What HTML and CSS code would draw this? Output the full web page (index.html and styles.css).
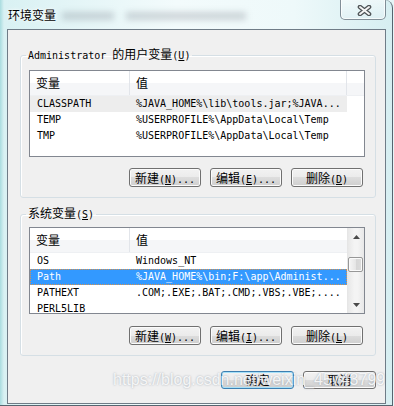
FILE: index.html
```html
<!DOCTYPE html>
<html lang="zh-CN">
<head>
    <meta charset="UTF-8">
    <meta name="viewport" content="width=device-width, initial-scale=1.0">
    <title>环境变量</title>
    <link rel="stylesheet" href="styles.css">
</head>
<body>

    <!-- Dialog window -->
    <div class="window">
        <div class="titlebar">
            <span class="title zh">环境变量</span>
            <span class="ghost" aria-hidden="true"><i></i><i></i></span>
            <button class="close" aria-label="关闭">
                <svg width="15" height="11" viewBox="0 0 15 11">
                    <path d="M3 2 L12 9 M12 2 L3 9" stroke="#4f5457" stroke-width="4.6" stroke-linecap="round" fill="none"/>
                    <path d="M3 2 L12 9 M12 2 L3 9" stroke="#f4f4f4" stroke-width="2" stroke-linecap="round" fill="none"/>
                </svg>
            </button>
        </div>

        <div class="content">
            <!-- User variables -->
            <fieldset class="group">
                <legend>Administrator <span class="zh">的用户变量</span>(<u>U</u>)</legend>
                <div class="list">
                    <div class="table">
                        <div class="head">
                            <div class="col zh">变量</div>
                            <div class="col zh">值</div>
                            <div class="col"></div>
                        </div>
                        <div class="row muted"><div class="col">CLASSPATH</div><div class="col">%JAVA_HOME%\lib\tools.jar;%JAVA...</div></div>
                        <div class="row"><div class="col">TEMP</div><div class="col">%USERPROFILE%\AppData\Local\Temp</div></div>
                        <div class="row"><div class="col">TMP</div><div class="col">%USERPROFILE%\AppData\Local\Temp</div></div>
                    </div>
                </div>
                <div class="actions">
                    <button class="btn"><span class="zh">新建</span>(<u>N</u>)...</button>
                    <button class="btn"><span class="zh">编辑</span>(<u>E</u>)...</button>
                    <button class="btn"><span class="zh">删除</span>(<u>D</u>)</button>
                </div>
            </fieldset>

            <!-- System variables -->
            <fieldset class="group group-sys">
                <legend><span class="zh">系统变量</span>(<u>S</u>)</legend>
                <div class="list">
                    <div class="table">
                        <div class="head">
                            <div class="col zh">变量</div>
                            <div class="col zh">值</div>
                        </div>
                        <div class="row"><div class="col">OS</div><div class="col">Windows_NT</div></div>
                        <div class="row selected"><div class="col">Path</div><div class="col">%JAVA_HOME%\bin;F:\app\Administ...</div></div>
                        <div class="row"><div class="col">PATHEXT</div><div class="col">.COM;.EXE;.BAT;.CMD;.VBS;.VBE;....</div></div>
                        <div class="row"><div class="col">PERL5LIB</div><div class="col"></div></div>
                    </div>
                    <div class="scroll">
                        <div class="arrow">
                            <svg width="7" height="4" viewBox="0 0 7 4"><path d="M0 4 L3.5 0 L7 4Z" fill="#4a4a4a"/></svg>
                        </div>
                        <div class="track"><div class="thumb"></div></div>
                        <div class="arrow">
                            <svg width="7" height="4" viewBox="0 0 7 4"><path d="M0 0 L7 0 L3.5 4Z" fill="#4a4a4a"/></svg>
                        </div>
                    </div>
                </div>
                <div class="actions">
                    <button class="btn"><span class="zh">新建</span>(<u>W</u>)...</button>
                    <button class="btn"><span class="zh">编辑</span>(<u>I</u>)...</button>
                    <button class="btn"><span class="zh">删除</span>(<u>L</u>)</button>
                </div>
            </fieldset>

            <div class="dialog-actions">
                <button class="btn btn-wide default zh">确定</button>
                <button class="btn btn-wide zh">取消</button>
            </div>
        </div>

        <div class="watermark">https://blog.csdn.net/weixin_45743799</div>
    </div>

</body>
</html>
```

FILE: styles.css
```css
/* General styles */
* {
    box-sizing: border-box;
}
body {
    margin: 0;
    font-family: "DejaVu Sans Mono", "Noto Sans CJK SC", monospace;
    font-size: 10px;
    letter-spacing: 0;
    line-height: 16px;
    color: #000;
    background: #e6f5f7;
}
.zh {
    font-family: "Noto Sans CJK SC", sans-serif;
    font-size: 12px;
    letter-spacing: 0;
}

/* Window frame (glass) */
.window {
    position: relative;
    width: 393px;
    height: 406px;
    border-right: 1px solid #56656f;
    border-bottom: 1px solid #56656f;
    border-top-right-radius: 8px;
    background: linear-gradient(90deg, #a9dcdf 0, #d9f1f3 4px, #f3fbfc 45%, #eef9fa 75%, #d6eef1 100%);
    overflow: hidden;
}
.titlebar {
    display: flex;
    align-items: flex-start;
    height: 29px;
}
.title {
    padding: 8px 0 0 8px;
    line-height: 14px;
    text-shadow: 0 0 4px #fff, 0 0 2px #fff;
}
.ghost {
    display: flex;
    gap: 12px;
    margin: 12px 0 0 6px;
}
.ghost i {
    display: block;
    width: 52px;
    height: 8px;
    background: rgba(95, 105, 115, 0.25);
    filter: blur(3px);
}
.ghost i + i {
    width: 120px;
}
.close {
    margin: -2px 6px 0 auto;
    width: 46px;
    height: 22px;
    padding: 2px 0 0;
    border: 1px solid rgba(70, 85, 98, 0.65);
    border-radius: 0 0 5px 5px;
    background: linear-gradient(rgba(255, 255, 255, 0.55), rgba(225, 240, 244, 0.6));
    box-shadow: inset 0 0 0 1px rgba(255, 255, 255, 0.7);
    display: flex;
    align-items: center;
    justify-content: center;
}
.close svg {
    margin-left: 3px;
}

/* Client area */
.content {
    margin-left: 7px;
    width: 379px;
    height: 375px;
    border: 1px solid #6f7c87;
    background: #f0f0f0;
    padding: 17px 9px 0 12px;
}

/* Group boxes */
.group {
    margin: 0;
    padding: 7px 10px 10px 8px;
    border: 1px solid #d5dfe5;
    border-radius: 3px;
    box-shadow: inset 1px 1px 0 #fff;
    min-inline-size: 0;
}
.group legend {
    margin-left: -3px;
    padding: 0 2px;
    line-height: 14px;
}
.group-sys {
    margin-top: 8px;
    padding-top: 5px;
}

/* List views */
.list {
    display: flex;
    height: 87px;
    border: 1px solid #828790;
    background: #fff;
    overflow: hidden;
}
.table {
    flex: 1;
    overflow: hidden;
}
.head {
    display: grid;
    grid-template-columns: 100px 217px 1fr;
    height: 25px;
    border-bottom: 1px solid #eef0f3;
    background: linear-gradient(#fff 0, #fff 50%, #f5f6f8 50%, #f5f6f8 100%);
}
.head .col {
    padding-left: 6px;
    line-height: 24px;
    border-right: 1px solid #e2e5ea;
}
.head .col:last-child {
    border-right: none;
}
.row {
    display: grid;
    grid-template-columns: 100px 217px;
    width: 317px;
    height: 16px;
    line-height: 16px;
    white-space: nowrap;
}
.row .col {
    overflow: hidden;
    padding-left: 6px;
}
.row .col:first-child {
    padding-left: 7px;
}
.row.muted {
    background: #ededed;
}
.row.selected {
    background: #3399ff;
    color: #fff;
    outline: 1px dotted #d9924a;
    outline-offset: -1px;
}

/* Scrollbar */
.scroll {
    width: 17px;
    display: flex;
    flex-direction: column;
    border-left: 1px solid #e6e6e6;
    background: linear-gradient(90deg, #e8e8e8, #f4f4f4 40%, #f4f4f4 60%, #e8e8e8);
}
.arrow {
    height: 17px;
    display: flex;
    align-items: center;
    justify-content: center;
}
.track {
    flex: 1;
    padding-top: 12px;
}
.thumb {
    width: 15px;
    height: 15px;
    border: 1px solid #979797;
    border-radius: 2px;
    background: linear-gradient(90deg, #f6f6f6, #e6e6e6 50%, #d6d6d6 50%, #dcdcdc);
    box-shadow: inset 0 0 0 1px #fafafa;
}

/* Buttons */
.actions {
    display: flex;
    justify-content: flex-end;
    gap: 9px;
    margin: 11px 2px 0 0;
}
.group-sys .actions {
    margin-top: 12px;
}
.btn {
    width: 72px;
    height: 19px;
    padding: 0;
    border: 1px solid #707070;
    border-radius: 3px;
    background: linear-gradient(#f2f2f2 0, #ebebeb 50%, #dddddd 50%, #cfcfcf 100%);
    box-shadow: inset 0 0 0 1px #fbfbfb;
    font-family: inherit;
    font-size: 10px;
    letter-spacing: 0;
    line-height: 17px;
    color: #000;
    white-space: nowrap;
}
.btn .zh {
    line-height: 17px;
}
.btn.zh {
    font-family: "Noto Sans CJK SC", sans-serif;
    font-size: 12px;
    letter-spacing: 0;
}
.btn-wide {
    width: 73px;
    height: 18px;
    line-height: 16px;
}
.btn.default {
    border-color: #3c7fb1;
    box-shadow: inset 0 0 0 1px #a6e0f8;
}
.dialog-actions {
    display: flex;
    justify-content: flex-end;
    gap: 9px;
    margin-top: 15px;
}

/* Watermark */
.watermark {
    position: absolute;
    left: 113px;
    top: 370px;
    font-family: "Liberation Sans", Arial, sans-serif;
    font-size: 16px;
    line-height: 20px;
    letter-spacing: 0;
    color: rgba(255, 255, 255, 0.85);
    text-shadow: 0 0 2px rgba(140, 150, 160, 0.8);
    pointer-events: none;
}
```
